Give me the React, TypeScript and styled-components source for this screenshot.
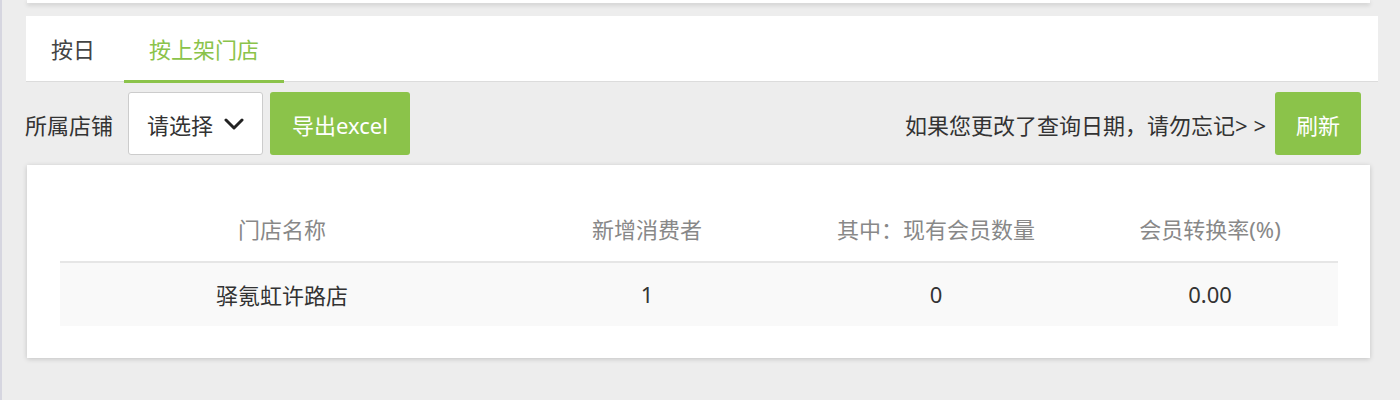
import styled, { createGlobalStyle } from "styled-components";

const GREEN = "#8bc34a";

const GlobalStyle = createGlobalStyle`
  html, body {
    margin: 0;
    padding: 0;
    background: #ededed;
  }
  body {
    font-family: "Noto Sans", "Noto Sans CJK SC", sans-serif;
    color: #333;
  }
`;

const Page = styled.div`
  min-height: 400px;
  border-left: 2px solid #d6d6e0;
  box-sizing: border-box;
`;

const TopCard = styled.div`
  margin: 0 30px 0 25px;
  height: 3px;
  background: #fff;
  box-shadow: 0 2px 4px rgba(0, 0, 0, 0.16);
`;

const Main = styled.div`
  padding: 13px 22px 0 24px;
`;

const TabBar = styled.div`
  display: flex;
  height: 65px;
  background: #fff;
  border-bottom: 1px solid #dcdcdc;
`;

const Tab = styled.div<{ $active?: boolean }>`
  display: flex;
  align-items: center;
  padding: 0 25px;
  margin-right: 4px;
  font-size: 22px;
  color: ${(p) => (p.$active ? GREEN : "#444")};
  border-bottom: 3px solid ${(p) => (p.$active ? GREEN : "transparent")};
  margin-bottom: -2px;
  cursor: pointer;
`;

const Toolbar = styled.div`
  display: flex;
  align-items: center;
  margin-top: 10px;
  height: 63px;
  padding-right: 17px;
  margin-left: -1px;
`;

const Label = styled.span`
  font-size: 22px;
  color: #333;
  margin-right: 15px;
`;

const Select = styled.div`
  display: flex;
  align-items: center;
  justify-content: space-between;
  box-sizing: border-box;
  width: 135px;
  height: 63px;
  padding: 0 18px;
  background: #fff;
  border: 1px solid #ccc;
  border-radius: 3px;
  font-size: 22px;
  color: #333;
`;

const Button = styled.button`
  height: 63px;
  padding: 0 21px;
  border: none;
  border-radius: 3px;
  background: ${GREEN};
  color: #fff;
  font-family: inherit;
  font-size: 22px;
  cursor: pointer;
`;

const ExportButton = styled(Button)`
  width: 140px;
  margin-left: 7px;
`;

const Spacer = styled.div`
  flex: 1;
`;

const Hint = styled.span`
  font-size: 22px;
  color: #333;
  margin-right: 9px;
`;

const TableCard = styled.div`
  margin: 10px 30px 0 25px;
  padding: 33px 32px 32px 33px;
  background: #fff;
  box-shadow: 0 1px 5px rgba(0, 0, 0, 0.18);
`;

const Table = styled.table`
  width: 100%;
  border-collapse: collapse;
  table-layout: fixed;
`;

const Th = styled.th`
  height: 60px;
  padding: 0 0 3px;
  font-weight: normal;
  font-size: 22px;
  color: #888;
  text-align: center;
  border-bottom: 2px solid #e6e6e6;
`;

const Td = styled.td`
  height: 61px;
  padding: 0 0 2px;
  font-size: 22px;
  color: #333;
  text-align: center;
  background: #f9f9f9;
`;

const Chevron = () => (
  <svg width="20" height="12" viewBox="0 0 20 12" fill="none">
    <path d="M2 2 L10 10 L18 2" stroke="#222" strokeWidth="3" strokeLinecap="round" strokeLinejoin="round" />
  </svg>
);

const columns = [
  { title: "门店名称", width: 444 },
  { title: "新增消费者", width: 286 },
  { title: "其中：现有会员数量", width: 292 },
  { title: "会员转换率(%)", width: 256 },
];

const rows = [["驿氪虹许路店", "1", "0", "0.00"]];

export default function App() {
  return (
    <Page>
      <GlobalStyle />
      <TopCard />
      <Main>
        <TabBar>
          <Tab>按日</Tab>
          <Tab $active>按上架门店</Tab>
        </TabBar>
        <Toolbar>
          <Label>所属店铺</Label>
          <Select>
            请选择
            <Chevron />
          </Select>
          <ExportButton>导出excel</ExportButton>
          <Spacer />
          <Hint>如果您更改了查询日期，请勿忘记&gt; &gt;</Hint>
          <Button>刷新</Button>
        </Toolbar>
      </Main>
      <TableCard>
        <Table>
          <colgroup>
            {columns.map((c) => (
              <col key={c.title} style={{ width: c.width }} />
            ))}
          </colgroup>
          <thead>
            <tr>
              {columns.map((c) => (
                <Th key={c.title}>{c.title}</Th>
              ))}
            </tr>
          </thead>
          <tbody>
            {rows.map((r) => (
              <tr key={r[0]}>
                {r.map((v, i) => (
                  <Td key={i}>{v}</Td>
                ))}
              </tr>
            ))}
          </tbody>
        </Table>
      </TableCard>
    </Page>
  );
}
